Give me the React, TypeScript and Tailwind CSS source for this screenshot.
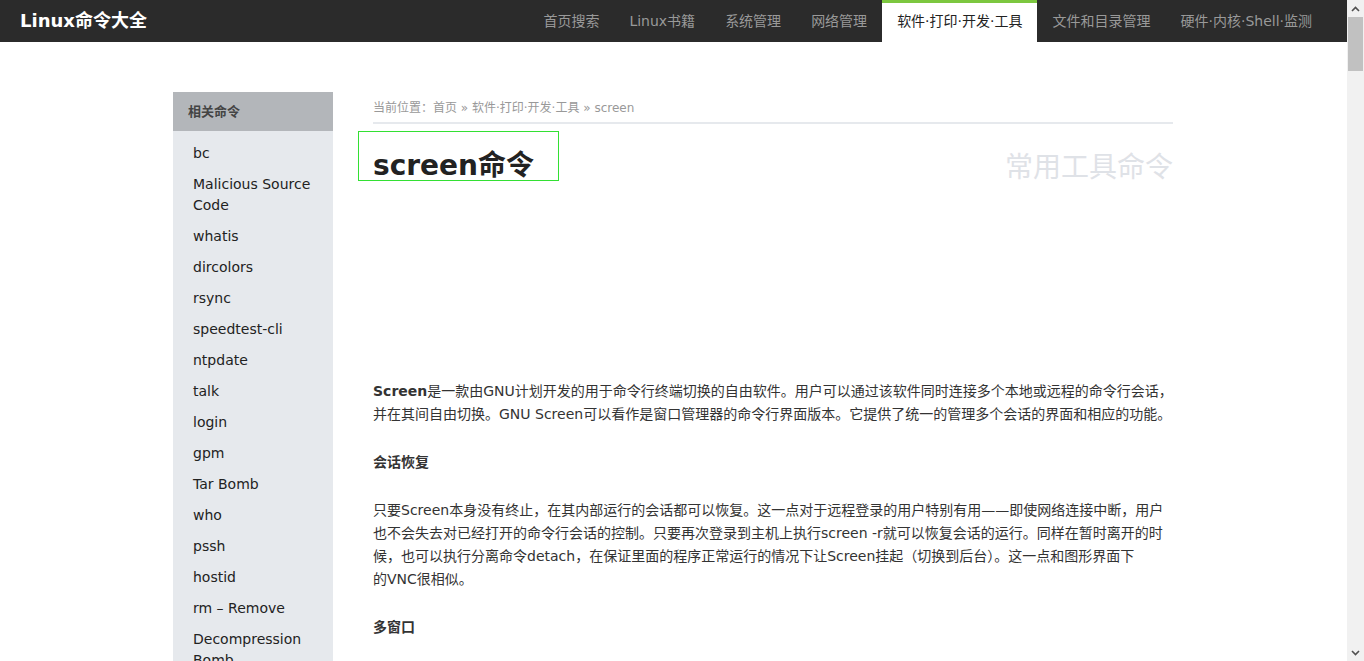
import React from 'react'

const navItems = ['首页搜索', 'Linux书籍', '系统管理', '网络管理', '软件·打印·开发·工具', '文件和目录管理', '硬件·内核·Shell·监测']
const activeNav = '软件·打印·开发·工具'

const related = [
  'bc',
  'Malicious Source Code',
  'whatis',
  'dircolors',
  'rsync',
  'speedtest-cli',
  'ntpdate',
  'talk',
  'login',
  'gpm',
  'Tar Bomb',
  'who',
  'pssh',
  'hostid',
  'rm – Remove',
  'Decompression Bomb',
  'ping',
  'wget',
]

function Header() {
  return (
    <div className="h-[42px] bg-[#2b2b2b] flex items-center justify-between pl-5 pr-5 shrink-0">
      <div className="text-white text-[18px] font-bold leading-[42px]">Linux命令大全</div>
      <nav className="flex h-full">
        {navItems.map((item) =>
          item === activeNav ? (
            <a key={item} className="h-full px-[15px] bg-white border-t-[3px] border-[#7cc73f] text-[#222] text-[14px] leading-[37px]">
              {item}
            </a>
          ) : (
            <a key={item} className="h-full px-[15px] text-[#999] text-[14px] leading-[42px]">
              {item}
            </a>
          )
        )}
      </nav>
    </div>
  )
}

function Sidebar() {
  return (
    <aside className="w-[160px] shrink-0 flex flex-col">
      <div className="h-[39px] bg-[#b3b6ba] pl-[15px] text-[13px] font-bold text-[#444] leading-[39px]">相关命令</div>
      <ul className="bg-[#e6e9ed] pt-[7px] pb-4 flex-1">
        {related.map((r) => (
          <li key={r} className="pl-5 pr-3 py-[5px] text-[14px] leading-[21px] text-[#222]">
            {r}
          </li>
        ))}
      </ul>
    </aside>
  )
}

function Content() {
  return (
    <main className="w-[800px] shrink-0 text-[#333]">
      <div className="pt-[7px] pb-[5px] text-[12px] leading-[18px] text-[#999] border-b-2 border-[#e6e9ed]">
        当前位置：首页 » 软件·打印·开发·工具 » screen
      </div>
      <div className="mt-[7px] flex items-end justify-between">
        <h1 className="ml-[-15px] w-[201px] h-[50px] border border-[#33e033] pl-[14px] pt-[20px] text-[28px] leading-[28px] font-bold text-[#222]">
          screen命令
        </h1>
        <span className="text-[28px] leading-[26px] text-[#dfe2e7]">常用工具命令</span>
      </div>
      <div className="h-[199px]" />
      <div className="text-[14px] leading-[23px]">
        <p className="mb-[25px]">
          <b>Screen</b>是一款由GNU计划开发的用于命令行终端切换的自由软件。用户可以通过该软件同时连接多个本地或远程的命令行会话，并在其间自由切换。GNU Screen可以看作是窗口管理器的命令行界面版本。它提供了统一的管理多个会话的界面和相应的功能。
        </p>
        <p className="mb-[25px] font-bold">会话恢复</p>
        <p className="mb-[25px]">
          只要Screen本身没有终止，在其内部运行的会话都可以恢复。这一点对于远程登录的用户特别有用——即使网络连接中断，用户也不会失去对已经打开的命令行会话的控制。只要再次登录到主机上执行screen -r就可以恢复会话的运行。同样在暂时离开的时候，也可以执行分离命令detach，在保证里面的程序正常运行的情况下让Screen挂起（切换到后台）。这一点和图形界面下<br />的VNC很相似。
        </p>
        <p className="mb-[25px] font-bold">多窗口</p>
        <p className="mb-[25px]">
          在Screen环境下，所有的会话都独立的运行，并拥有各自的编号、输入、输出和窗口缓存。
        </p>
      </div>
    </main>
  )
}

function Scrollbar() {
  return (
    <div className="w-[17px] shrink-0 bg-[#f1f1f1] flex flex-col items-center">
      <div className="h-[17px] flex items-center justify-center">
        <svg width="9" height="6" viewBox="0 0 9 6">
          <path d="M1 5 L4.5 1.5 L8 5" fill="none" stroke="#505050" strokeWidth="1.6" />
        </svg>
      </div>
      <div className="w-[15px] h-[54px] bg-[#c1c1c1]" />
      <div className="flex-1" />
      <div className="h-[17px] flex items-center justify-center">
        <svg width="9" height="6" viewBox="0 0 9 6">
          <path d="M1 1 L4.5 4.5 L8 1" fill="none" stroke="#505050" strokeWidth="1.6" />
        </svg>
      </div>
    </div>
  )
}

export default function App() {
  return (
    <div
      className="flex h-[661px] overflow-hidden bg-white"
      style={{ fontFamily: '"DejaVu Sans", "Noto Sans CJK SC", sans-serif' }}
    >
      <div className="flex-1 min-w-0 flex flex-col">
        <Header />
        <div className="w-[1000px] ml-[173px] mt-[50px] flex gap-10 flex-1">
          <Sidebar />
          <Content />
        </div>
      </div>
      <Scrollbar />
    </div>
  )
}
